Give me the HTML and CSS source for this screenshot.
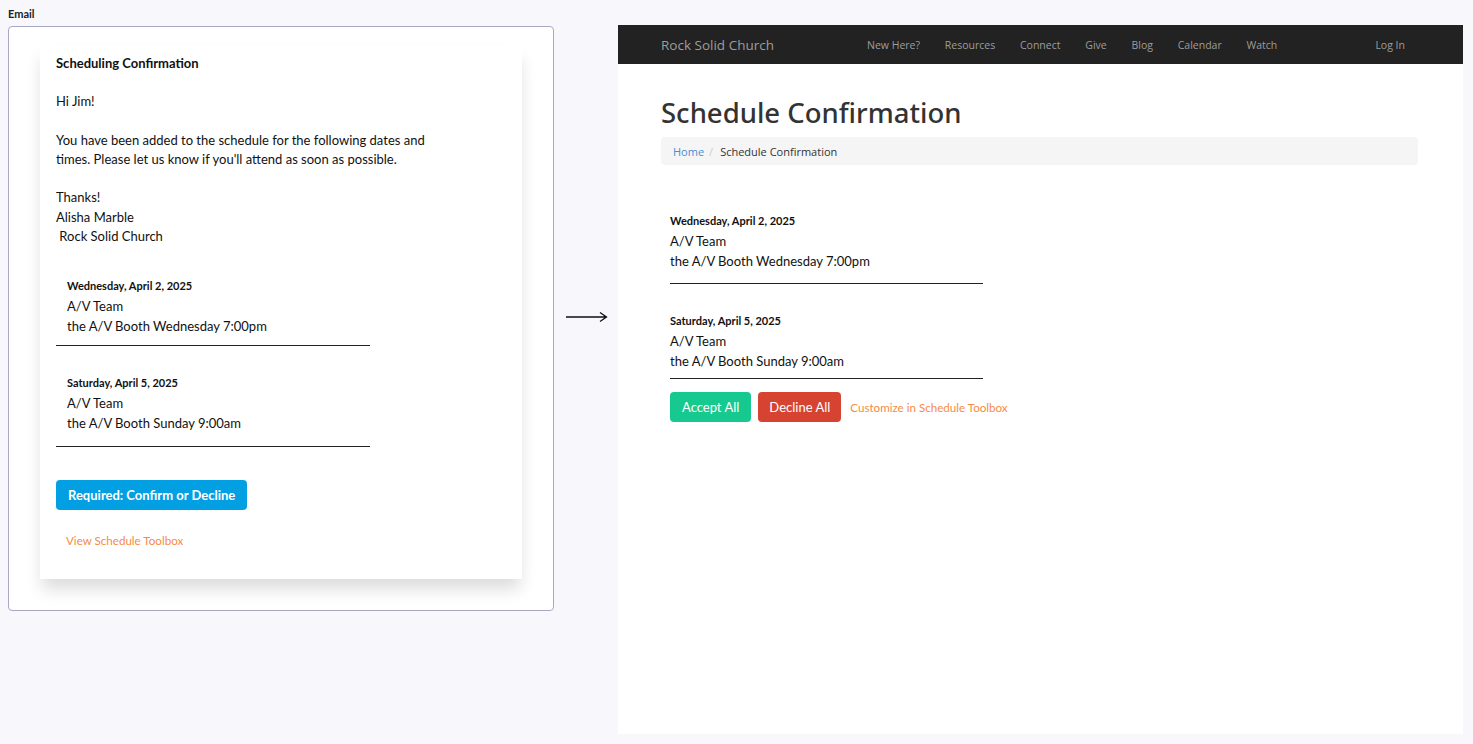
FILE: index.html
```html
<!DOCTYPE html>
<html>
<head>
<meta charset="utf-8">
<link rel="stylesheet" href="styles.css">
</head>
<body>
<div class="page">
  <section class="email-col">
    <div class="label">Email</div>
    <div class="frame">
      <div class="card">
        <div class="card-title">Scheduling Confirmation</div>
        <div class="msg">
          <p>Hi Jim!</p>
          <p>You have been added to the schedule for the following dates and<br>times. Please let us know if you'll attend as soon as possible.</p>
          <p>Thanks!<br>Alisha Marble<br>&nbsp;Rock Solid Church</p>
        </div>
        <div class="sched email-sched">
          <div class="item">
            <div class="date">Wednesday, April 2, 2025</div>
            <div class="line">A/V Team</div>
            <div class="line">the A/V Booth Wednesday 7:00pm</div>
          </div>
          <div class="item">
            <div class="date">Saturday, April 5, 2025</div>
            <div class="line">A/V Team</div>
            <div class="line">the A/V Booth Sunday 9:00am</div>
          </div>
        </div>
        <a class="btn-blue">Required: Confirm or Decline</a>
        <a class="link-orange toolbox">View Schedule Toolbox</a>
      </div>
    </div>
  </section>
  <div class="arrow">
    <svg width="42" height="12" viewBox="0 0 42 12"><path d="M0 6H40M34 1.5L40.5 6L34 10.5" fill="none" stroke="#111" stroke-width="1.3"/></svg>
  </div>
  <section class="site">
    <nav class="navbar">
      <span class="brand">Rock Solid Church</span>
      <ul class="nav">
        <li>New Here?</li><li>Resources</li><li>Connect</li><li>Give</li><li>Blog</li><li>Calendar</li><li>Watch</li>
      </ul>
      <span class="login">Log In</span>
    </nav>
    <div class="content">
      <h1>Schedule Confirmation</h1>
      <div class="crumbs"><span class="home">Home</span><span class="sep">/</span><span>Schedule Confirmation</span></div>
      <div class="sched site-sched">
        <div class="item">
          <div class="date">Wednesday, April 2, 2025</div>
          <div class="line">A/V Team</div>
          <div class="line">the A/V Booth Wednesday 7:00pm</div>
        </div>
        <div class="item">
          <div class="date">Saturday, April 5, 2025</div>
          <div class="line">A/V Team</div>
          <div class="line">the A/V Booth Sunday 9:00am</div>
        </div>
      </div>
      <div class="actions">
        <a class="btn btn-green">Accept All</a>
        <a class="btn btn-red">Decline All</a>
        <a class="link-orange">Customize in Schedule Toolbox</a>
      </div>
    </div>
  </section>
</div>
</body>
</html>
```
FILE: styles.css
```css
* { box-sizing: border-box; }
html, body { margin: 0; padding: 0; }
body {
  background: #f7f7fc;
  font-family: Lato, "Noto Sans", sans-serif;
  color: #111;
  width: 1473px;
  height: 744px;
  overflow: hidden;
}
.page {
  display: flex;
  align-items: flex-start;
  padding: 0 10px 0 8px;
}
.email-col {
  width: 546px;
  flex: none;
}
.label {
  font-size: 11px;
  font-weight: 700;
  color: #222;
  height: 26px;
  padding-top: 8px;
  line-height: 12px;
}
.frame {
  background: #fff;
  border: 1px solid #a9a8c3;
  border-radius: 4px;
  height: 585px;
  padding: 18px 31px 0 31px;
}
.card {
  background: #fff;
  box-shadow: 0 12px 16px -2px rgba(0,0,0,0.14);
  height: 534px;
  padding: 9px 16px 0 16px;
  display: flex;
  flex-direction: column;
  align-items: flex-start;
}
.card-title {
  font-size: 13px;
  font-weight: 700;
  line-height: 18px;
}
.msg {
  margin-top: 20px;
  font-size: 13px;
  line-height: 19.3px;
}
.msg p { margin: 0 0 19.3px 0; }
.msg p:last-child { margin-bottom: 0; }
.sched .item {
  border-bottom: 1px solid #222;
}
.sched .date {
  font-size: 11px;
  font-weight: 700;
  line-height: 15px;
}
.sched .line {
  font-size: 13px;
  line-height: 19.5px;
}
.email-sched {
  margin-top: 32px;
  width: 314px;
}
.email-sched .item {
  padding: 0 0 9px 11px;
  margin-bottom: 29px;
}
.email-sched .date { margin-bottom: 4px; }
.email-sched .item:last-child { margin-bottom: 33px; padding-bottom: 13px; }
.btn-blue {
  display: inline-block;
  background: #029fe3;
  color: #fff;
  font-size: 13px;
  font-weight: 700;
  line-height: 30px;
  height: 30px;
  padding: 0 12px;
  border-radius: 4px;
}
.link-orange {
  color: #f68b45;
  font-size: 11.6px;
}
.toolbox {
  margin-top: 24px;
  margin-left: 10px;
}
.arrow {
  flex: none;
  width: 64px;
  padding: 307px 0 0 12px;
}
.site {
  flex: none;
  width: 845px;
  height: 709px;
  margin-top: 25px;
  background: #fff;
}
.navbar {
  background: #222;
  height: 39px;
  display: flex;
  align-items: center;
  padding: 0 43px;
  color: #9d9d9d;
  font-family: "Open Sans", "Noto Sans", sans-serif;
}
.brand {
  font-size: 13.5px;
  width: 206px;
}
.nav {
  list-style: none;
  margin: 0;
  padding: 0;
  display: flex;
  gap: 24.8px;
  font-size: 10.5px;
  flex: 1;
}
.login { font-size: 10.5px; margin-right: 15px; }
.content {
  padding: 0 45px 0 43px;
  font-family: "Open Sans", "Noto Sans", sans-serif;
}
h1 {
  margin: 0;
  padding-top: 31px;
  font-size: 27.5px;
  font-weight: 500;
  color: #333;
  line-height: 36px;
  font-family: "Noto Sans", sans-serif;
}
.crumbs {
  margin-top: 6px;
  background: #f5f5f5;
  border-radius: 4px;
  height: 28px;
  display: flex;
  align-items: center;
  padding: 0 12px;
  font-size: 11px;
  color: #333;
}
.crumbs .home { color: #4b8ed0; }
.crumbs .sep { color: #ccc; padding: 0 7px 0 5px; }
.site-sched {
  margin-top: 48px;
  margin-left: 9px;
  width: 313px;
  font-family: Lato, "Noto Sans", sans-serif;
}
.site-sched .item { padding-bottom: 12px; margin-bottom: 29px; }
.site-sched .item:last-child { margin-bottom: 13px; padding-bottom: 7px; }
.site-sched .date { margin-bottom: 4px; }
.actions {
  margin-left: 9px;
  display: flex;
  align-items: center;
  gap: 7px;
  font-family: Lato, "Noto Sans", sans-serif;
}
.btn {
  display: inline-block;
  color: #fff;
  font-size: 13px;
  height: 30px;
  line-height: 30px;
  padding: 0 12px;
  border-radius: 4px;
}
.btn-red { padding: 0 11px; }
.btn-green { background: #16c98e; }
.btn-red { background: #d64431; }
.actions .link-orange { margin-left: 2px; }
```
